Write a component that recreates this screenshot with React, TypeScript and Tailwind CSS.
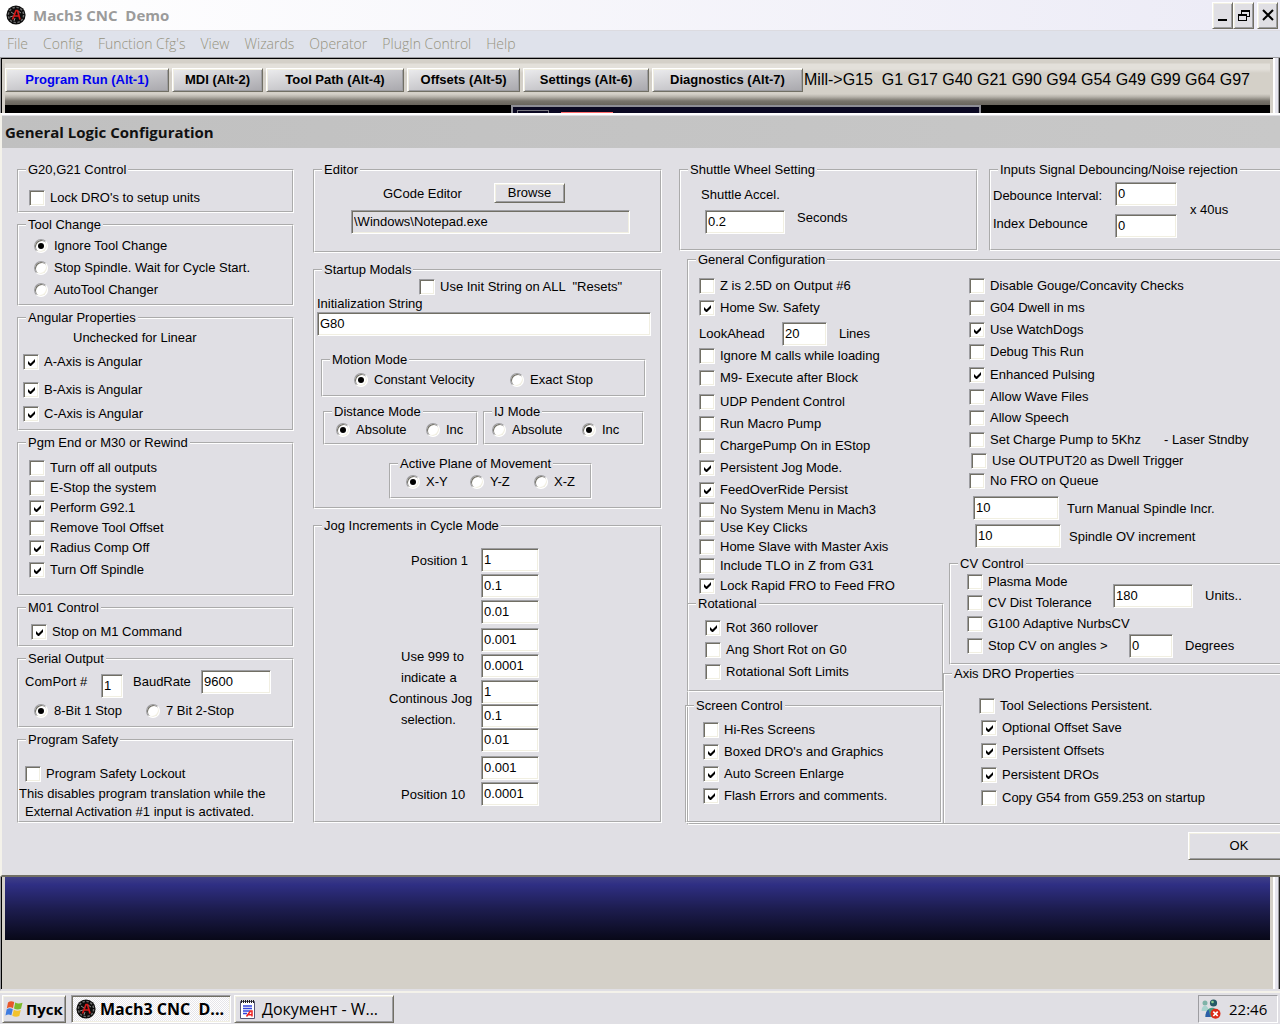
import { useId } from "react";
import type { ReactNode } from "react";
import clsx from "clsx";

const sunken =
  "border border-[#9d9da1] border-b-white border-r-white shadow-[inset_1px_1px_0_#716f64,inset_-1px_-1px_0_#f1efe2]";
const raised =
  "border border-white border-b-[#716f64] border-r-[#716f64] shadow-[inset_1px_1px_0_#f1efe2,inset_-1px_-1px_0_#9d9da1]";

type GroupProps = {
  title: string;
  className?: string;
  children: ReactNode;
};

const Group = ({ title, className, children }: GroupProps) => (
  <fieldset className={clsx("min-w-0 border-2 border-white [border-style:groove]", className)}>
    <legend className="ml-[7px] px-[2px] h-4">{title}</legend>
    {children}
  </fieldset>
);

type ToggleProps = {
  label: string;
  on?: boolean;
  className?: string;
  name?: string;
};

const Check = ({ label, on, className = "h-[22px] pl-2.5" }: ToggleProps) => (
  <label className={clsx("flex items-center gap-[5px] whitespace-pre", className)}>
    <span className="grid place-items-center shrink-0">
      <input
        type="checkbox"
        defaultChecked={on}
        className={clsx("peer col-start-1 row-start-1 appearance-none w-4 h-4 bg-white", sunken)}
      />
      <svg
        viewBox="0 0 7 7"
        className="hidden peer-checked:block col-start-1 row-start-1 w-[7px] h-[7px] pointer-events-none"
      >
        <path d="M0 2v3l2 2h1l4-4V0L2.5 4.5z" />
      </svg>
    </span>
    {label}
  </label>
);

const Radio = ({ label, on, name, className }: ToggleProps) => (
  <label className={clsx("flex items-center gap-[6px] whitespace-pre", className)}>
    <span className="grid place-items-center shrink-0">
      <input
        type="radio"
        name={name}
        defaultChecked={on}
        className={clsx(
          "peer col-start-1 row-start-1 appearance-none w-[14px] h-[14px] rounded-full bg-white",
          sunken
        )}
      />
      <svg
        viewBox="0 0 6 6"
        className="hidden peer-checked:block col-start-1 row-start-1 w-[6px] h-[6px] pointer-events-none"
      >
        <circle cx="3" cy="3" r="3" />
      </svg>
    </span>
    {label}
  </label>
);

type BoxProps = {
  id?: string;
  label?: string;
  value: string;
  readOnly?: boolean;
  className?: string;
};

const Box = ({ id, label, value, readOnly, className }: BoxProps) => (
  <input
    id={id}
    aria-label={label}
    type="text"
    defaultValue={value}
    readOnly={readOnly}
    className={clsx("h-6 shrink-0 pl-[2px] pb-px", !readOnly && "bg-white", sunken, className)}
  />
);

const MachLogo = ({ className }: { className?: string }) => (
  <svg viewBox="0 0 20 20" className={clsx("shrink-0", className)}>
    <circle cx="10" cy="10" r="9.6" fill="#0c0c0c" />
    <circle cx="10" cy="10" r="7.6" fill="none" stroke="#6d6d6d" strokeWidth="1.4" strokeDasharray="2.4 1.6" />
    <path d="M5 7l3 2M4 12l3-1M8 16l1-3M15 8l-3-2" stroke="#8a8a8a" strokeWidth="1" />
    <path d="M6.5 14.5L10 5.5h1.5l2.5 9M8.5 11h4.5" fill="none" stroke="#d61a1a" strokeWidth="1.7" />
  </svg>
);

const TitleBar = () => (
  <header className="flex items-center h-[31px] pl-[6px] pr-[2px] bg-linear-to-r from-white to-[#ecebf6] border-b border-[#dcdbe0]">
    <MachLogo className="w-5 h-5" />
    <h1 className="ml-[7px] font-['Open_Sans'] font-bold text-[15px] text-[#9b9b9b] whitespace-pre">
      Mach3 CNC  Demo
    </h1>
    <div className="ml-auto flex">
      <button aria-label="Minimize" className={clsx("grid place-items-center w-[21px] h-[27px] bg-[#e0dfe4]", raised)}>
        <svg viewBox="0 0 12 14" className="w-3 h-[14px]">
          <path d="M1 11h9v2H1z" />
        </svg>
      </button>
      <button aria-label="Restore" className={clsx("grid place-items-center w-[21px] h-[27px] bg-[#e0dfe4]", raised)}>
        <svg viewBox="0 0 12 14" className="w-3 h-[14px]" fill="none" stroke="#000" shapeRendering="crispEdges">
          <path d="M3.5 6V2.5h8v6H9M3 3.5h9M.5 6.5h8v6h-8zM0 7.5h9" />
        </svg>
      </button>
      <button aria-label="Close" className={clsx("ml-[3px] grid place-items-center w-[21px] h-[27px] bg-[#e0dfe4]", raised)}>
        <svg viewBox="0 0 12 14" className="w-3 h-[14px]" fill="none" stroke="#000" strokeWidth="2">
          <path d="M1 2l10 10M11 2L1 12" />
        </svg>
      </button>
    </div>
  </header>
);

const menus = ["File", "Config", "Function Cfg's", "View", "Wizards", "Operator", "PlugIn Control", "Help"];

const MenuBar = () => (
  <nav className="flex items-center gap-[15px] h-[26px] pl-[7px] bg-[#dfe2eb] font-['Open_Sans'] font-light text-[14px] text-[#96937f]">
    {menus.map((item) => (
      <button key={item}>{item}</button>
    ))}
  </nav>
);

const tabs = [
  { label: "Program Run (Alt-1)", width: "w-[164px]" },
  { label: "MDI (Alt-2)", width: "w-[91px]" },
  { label: "Tool Path (Alt-4)", width: "w-[138px]" },
  { label: "Offsets (Alt-5)", width: "w-[113px]" },
  { label: "Settings (Alt-6)", width: "w-[126px]" },
  { label: "Diagnostics (Alt-7)", width: "w-[151px]" },
];

// window edges on both sides of the Mach3 screen
const ScreenFrame = ({ className, children }: { className?: string; children: ReactNode }) => (
  <div className={clsx("flex bg-[#d4d0c8] border-l border-[#9d9da1]", className)}>
    <div className="w-px bg-black" />
    <div className="flex-1 min-w-0 flex flex-col pl-[3px] pr-[3px]">{children}</div>
    <div className="w-[5px] bg-[#e6e5ee] border-l-2 border-white" />
    <div className="w-[2px] bg-[#222] border-l border-[#9d9da1]" />
  </div>
);

const ScreenTop = () => (
  <ScreenFrame className="border-t border-t-[#9d9da1]">
    <div className="h-px -mx-[3px] bg-black" />
    <div className="flex items-center h-[46px] pb-1 pr-4 bg-[linear-gradient(#d4d0c8_0_4px,#e3e0da_5px_10px,#d4d0c8_14px,#d4d0c8_35px,#b4b0a8_38px,#77736b_42px,#68645c_46px)]">
      <div className="flex gap-[3px]">
        {tabs.map(({ label, width }, index) => (
          <button
            key={label}
            className={clsx(
              "h-6 whitespace-nowrap font-bold bg-linear-to-br from-[#ececee] to-[#a9a8ad]",
              raised,
              width,
              index === 0 && "text-[#0000f0]"
            )}
          >
            {label}
          </button>
        ))}
      </div>
      <output className="ml-px text-[16px] whitespace-pre">
        Mill-&gt;G15  G1 G17 G40 G21 G90 G94 G54 G49 G99 G64 G97
      </output>
    </div>
    <div className="flex h-2 bg-black">
      <div className="flex-[508]" />
      <div className="flex-[467] flex items-end bg-[#0a0822] border-2 border-b-0 border-[#8d8d95]">
        <div className="ml-1 w-8 h-[3px] border border-b-0 border-[#77777f]" />
        <div className="ml-3 w-[52px] h-px bg-[#ff6b6b]" />
      </div>
      <div className="flex-[290]" />
    </div>
  </ScreenFrame>
);

const ScreenBottom = () => (
  <ScreenFrame className="flex-1 border-b-2 border-b-[#e0dfe4]">
    <div className="h-[63px] bg-[linear-gradient(#3f3f86,#2f2f84_12%,#1d1d50_50%,#080818)]" />
  </ScreenFrame>
);

const LeftColumn = () => (
  <div className="w-[277px] shrink-0 flex flex-col gap-1">
    <Group title="G20,G21 Control" className="pt-3 pb-[5px]">
      <Check label="Lock DRO's to setup units" className="h-4 pl-2.5" />
    </Group>
    <Group title="Tool Change" className="pt-[2px] pb-[3px]">
      <Radio name="tool" label="Ignore Tool Change" on className="h-[22px] pl-[15px]" />
      <Radio name="tool" label="Stop Spindle. Wait for Cycle Start." className="h-[22px] pl-[15px]" />
      <Radio name="tool" label="AutoTool Changer" className="h-[22px] pl-[15px]" />
    </Group>
    <Group title="Angular Properties" className="pb-[7px]">
      <p className="h-6 leading-6 pl-[54px]">Unchecked for Linear</p>
      <Check label="A-Axis is Angular" on className="h-6 pl-1" />
      <Check label="B-Axis is Angular" on className="h-8 pl-1" />
      <Check label="C-Axis is Angular" on className="h-4 pl-1" />
    </Group>
    <Group title="Pgm End or M30 or Rewind" className="pt-[7px] pb-3">
      <Check label="Turn off all outputs" className="h-5 pl-2.5" />
      <Check label="E-Stop the system" className="h-5 pl-2.5" />
      <Check label="Perform G92.1" on className="h-5 pl-2.5" />
      <Check label="Remove Tool Offset" className="h-5 pl-2.5" />
      <Check label="Radius Comp Off" on className="h-5 pl-2.5" />
      <Check label="Turn Off Spindle" on className="h-6 pl-2.5" />
    </Group>
    <Group title="M01 Control" className="pt-1 pb-px">
      <Check label="Stop on M1 Command" on className="h-6 pl-3" />
    </Group>
    <Group title="Serial Output" className="pt-[3px] pb-1">
      <div className="flex items-start pl-[6px] h-[30px]">
        <label htmlFor="comport" className="w-[76px] leading-6">ComPort #</label>
        <Box id="comport" value="1" className="mt-1 w-[22px]" />
        <label htmlFor="baud" className="w-[68px] ml-2.5 leading-6">BaudRate</label>
        <Box id="baud" value="9600" className="w-[70px]" />
      </div>
      <div className="flex h-[22px] pl-[15px]">
        <Radio name="bits" label="8-Bit 1 Stop" on className="w-28" />
        <Radio name="bits" label="7 Bit 2-Stop" />
      </div>
    </Group>
    <Group title="Program Safety" className="pt-4">
      <Check label="Program Safety Lockout" className="h-5 pl-[6px]" />
      <p className="mt-px leading-[18px] whitespace-nowrap">
        This disables program translation while the
        <br />
        <span className="pl-[6px]">External Activation #1 input is activated.</span>
      </p>
    </Group>
  </div>
);

const jogValues = [
  { value: "1", height: "h-[26px]" },
  { value: "0.1", height: "h-[26px]" },
  { value: "0.01", height: "h-7" },
  { value: "0.001", height: "h-[26px]" },
  { value: "0.0001", height: "h-[26px]" },
  { value: "1", height: "h-6" },
  { value: "0.1", height: "h-6" },
  { value: "0.01", height: "h-7" },
  { value: "0.001", height: "h-[26px]" },
  { value: "0.0001", height: "h-6" },
];

const MiddleColumn = () => (
  <div className="w-[349px] shrink-0 flex flex-col gap-[9px]">
    <Group title="Editor" className="pt-[5px] pb-[17px]">
      <div className="flex pl-[68px]">
        <label htmlFor="editor" className="w-[111px] leading-[22px]">GCode Editor</label>
        <button type="button" className={clsx("w-[71px] h-5", raised)}>Browse</button>
      </div>
      <Box id="editor" value="\Windows\Notepad.exe" readOnly className="block mt-[5px] ml-9 w-[279px]" />
    </Group>
    <Group title="Startup Modals" className="pb-2">
      <div className="pl-[2px] pr-[9px]">
        <Check label={'Use Init String on ALL  "Resets"'} className="h-[18px] pl-[102px]" />
        <label htmlFor="init" className="block h-4">Initialization String</label>
        <Box id="init" value="G80" className="block w-full" />
        <Group title="Motion Mode" className="mt-4 ml-1 mr-[5px] pb-[3px]">
          <div className="flex h-6 pl-[31px]">
            <Radio name="motion" label="Constant Velocity" on className="w-[156px]" />
            <Radio name="motion" label="Exact Stop" />
          </div>
        </Group>
        <div className="flex gap-[5px] mt-[7px] ml-[6px] mr-[7px]">
          <Group title="Distance Mode" className="w-[155px] pb-[3px]">
            <div className="flex h-5 pl-[11px]">
              <Radio name="distance" label="Absolute" on className="w-[90px]" />
              <Radio name="distance" label="Inc" />
            </div>
          </Group>
          <Group title="IJ Mode" className="flex-1 pb-[3px]">
            <div className="flex h-5 pl-[7px]">
              <Radio name="ij" label="Absolute" className="w-[90px]" />
              <Radio name="ij" label="Inc" on />
            </div>
          </Group>
        </div>
        <Group title="Active Plane of Movement" className="mt-[11px] ml-[72px] w-[203px] pb-[5px]">
          <div className="flex h-5 pl-[15px]">
            <Radio name="plane" label="X-Y" on className="w-16" />
            <Radio name="plane" label="Y-Z" className="w-16" />
            <Radio name="plane" label="X-Z" />
          </div>
        </Group>
      </div>
    </Group>
    <Group title="Jog Increments in Cycle Mode" className="pt-[14px] pb-[15px]">
      <div className="flex">
        <div className="w-[166px] flex flex-col pl-[74px]">
          <span className="pl-[22px] leading-[26px]">Position 1</span>
          <p className="mt-[72px] leading-[21px] whitespace-nowrap">
            <span className="pl-3">Use 999 to</span>
            <br />
            <span className="pl-3">indicate a</span>
            <br />
            Continous Jog
            <br />
            <span className="pl-3">selection.</span>
          </p>
          <span className="mt-auto pl-3 leading-[22px]">Position 10</span>
        </div>
        <div className="flex flex-col">
          {jogValues.map(({ value, height }, index) => (
            <div key={index} className={height}>
              <Box label={`Position ${index + 1}`} value={value} className="block w-[58px]" />
            </div>
          ))}
        </div>
      </div>
    </Group>
  </div>
);

const generalLeft = [
  { label: "Ignore M calls while loading" },
  { label: "M9- Execute after Block" },
  { label: "UDP Pendent Control", className: "h-[22px] pl-2.5 mt-[2px]" },
  { label: "Run Macro Pump" },
  { label: "ChargePump On in EStop" },
  { label: "Persistent Jog Mode.", on: true },
  { label: "FeedOverRide Persist", on: true },
  { label: "No System Menu in Mach3", className: "h-[18px] pl-2.5" },
  { label: "Use Key Clicks", className: "h-[18px] pl-2.5" },
  { label: "Home Slave with Master Axis", className: "h-5 pl-2.5" },
  { label: "Include TLO in Z from G31", className: "h-[18px] pl-2.5" },
  { label: "Lock Rapid FRO to Feed FRO", on: true, className: "h-[21px] pl-2.5" },
];

const SpindleField = ({ label, className }: { label: string; className?: string }) => {
  const id = useId();
  return (
    <div className={clsx("flex h-7", className)}>
      <Box id={id} value="10" className="w-[86px]" />
      <label htmlFor={id} className="ml-2 leading-[26px] whitespace-nowrap">{label}</label>
    </div>
  );
};

const GeneralConfiguration = () => (
  <Group title="General Configuration" className="ml-2 border-r-0">
    <div className="flex">
      <div className="w-[254px] shrink-0 pt-[7px]">
        <Check label="Z is 2.5D on Output #6" />
        <Check label="Home Sw. Safety" on />
        <div className="flex h-[26px] pt-[3px] pl-2.5">
          <label htmlFor="lookahead" className="w-[83px] leading-6">LookAhead</label>
          <Box id="lookahead" value="20" className="w-[45px]" />
          <span className="ml-3 leading-6">Lines</span>
        </div>
        {generalLeft.map((item) => (
          <Check key={item.label} {...item} />
        ))}
        <Group title="Rotational" className="-ml-[2px] -mr-px pt-[5px] pb-[7px]">
          <Check label="Rot 360 rollover" on className="h-[22px] pl-4" />
          <Check label="Ang Short Rot on G0" className="h-[22px] pl-4" />
          <Check label="Rotational Soft Limits" className="h-[22px] pl-4" />
        </Group>
        <Group title="Screen Control" className="-ml-1 mr-px mt-[6px] pt-[5px] pb-[14px]">
          <Check label="Hi-Res Screens" className="h-[22px] pl-4" />
          <Check label="Boxed DRO's and Graphics" on className="h-[22px] pl-4" />
          <Check label="Auto Screen Enlarge" on className="h-[22px] pl-4" />
          <Check label="Flash Errors and comments." on className="h-[22px] pl-4" />
        </Group>
      </div>
      <div className="flex-1 min-w-0 flex flex-col pt-[7px]">
        <div className="pl-4">
          <Check label="Disable Gouge/Concavity Checks" />
          <Check label="G04 Dwell in ms" />
          <Check label="Use WatchDogs" on />
          <Check label="Debug This Run" />
          <Check label="Enhanced Pulsing" on className="h-6 pl-2.5" />
          <Check label="Allow Wave Files" className="h-5 pl-2.5" />
          <Check label="Allow Speech" />
          <div className="flex items-center">
            <Check label="Set Charge Pump to 5Khz" className="h-[22px] pl-2.5 w-[205px]" />
            <span className="whitespace-nowrap">- Laser Stndby</span>
          </div>
          <Check label="Use OUTPUT20 as Dwell Trigger" className="h-5 pl-3" />
          <Check label="No FRO on Queue" className="h-5 pl-2.5" />
          <SpindleField label="Turn Manual Spindle Incr." className="mt-[5px] pl-[14px]" />
          <SpindleField label="Spindle OV increment" className="pl-4" />
        </div>
        <Group title="CV Control" className="mt-1 ml-[6px] border-r-0 pb-[5px]">
          <div className="flex h-[42px]">
            <div className="w-[162px]">
              <Check label="Plasma Mode" className="h-5 pl-4" />
              <Check label="CV Dist Tolerance" className="h-[22px] pl-4" />
            </div>
            <Box label="CV distance tolerance" value="180" className="mt-3 w-20" />
            <span className="ml-3 mt-3 leading-6">Units..</span>
          </div>
          <Check label="G100 Adaptive NurbsCV" className="h-5 pl-4" />
          <div className="flex h-6">
            <Check label="Stop CV on angles >" className="pl-4 w-[178px]" />
            <Box label="CV stop angle" value="0" className="w-11" />
            <span className="ml-3 leading-6">Degrees</span>
          </div>
        </Group>
        <Group title="Axis DRO Properties" className="flex-1 mt-px pt-[13px] border-r-0 border-b-0">
          <Check label="Tool Selections Persistent." className="h-[22px] pl-[34px]" />
          <Check label="Optional Offset Save" on className="h-[22px] pl-9" />
          <Check label="Persistent Offsets" on className="h-6 pl-9" />
          <Check label="Persistent DROs" on className="h-6 pl-9" />
          <Check label="Copy G54 from G59.253 on startup" className="h-[22px] pl-9" />
        </Group>
      </div>
    </div>
  </Group>
);

const RightColumn = () => (
  <div className="flex-1 min-w-0">
    <div className="flex gap-[11px]">
      <Group title="Shuttle Wheel Setting" className="w-[299px] shrink-0 h-[89px] pt-[7px]">
        <label htmlFor="shuttle" className="block pl-5 h-[25px] leading-5">Shuttle Accel.</label>
        <div className="flex pl-6">
          <Box id="shuttle" value="0.2" className="w-20" />
          <span className="ml-3">Seconds</span>
        </div>
      </Group>
      <Group title="Inputs Signal Debouncing/Noise rejection" className="flex-1 whitespace-nowrap border-r-0 pt-1">
        <div className="flex items-center pl-[2px]">
          <div className="flex flex-col gap-1">
            <div className="flex">
              <label htmlFor="debounce" className="w-[122px] leading-7">Debounce Interval:</label>
              <Box id="debounce" value="0" className="w-[62px]" />
            </div>
            <div className="flex">
              <label htmlFor="index-debounce" className="w-[122px] leading-5">Index Debounce</label>
              <Box id="index-debounce" value="0" className="w-[62px]" />
            </div>
          </div>
          <span className="ml-[13px]">x 40us</span>
        </div>
      </Group>
    </div>
    <div className="mt-px">
      <GeneralConfiguration />
    </div>
  </div>
);

const ConfigDialog = () => (
  <section
    role="dialog"
    aria-labelledby="dialog-title"
    className="overflow-hidden bg-[#e0dfe4] border-l-2 border-l-[#f4f2ea] border-t-2 border-t-white border-b-2 border-b-[#716f64]"
  >
    <h2
      id="dialog-title"
      className="h-8 leading-8 mt-px pl-[3px] bg-linear-to-r from-[#c0c0c0] to-[#c8c8c8] font-['Open_Sans'] font-bold text-[15px] text-[#111]"
    >
      General Logic Configuration
    </h2>
    <form className="pt-[14px]">
      <div className="flex items-start pl-[15px]">
        <LeftColumn />
        <div className="w-[19px] shrink-0" />
        <MiddleColumn />
        <div className="w-[17px] shrink-0" />
        <RightColumn />
      </div>
      <div className="flex justify-end mt-[7px] mb-[15px]">
        <button type="button" className={clsx("h-7 w-[102px] -mr-[10px]", raised)}>OK</button>
      </div>
    </form>
  </section>
);

const TaskBar = () => (
  <footer className="flex items-center h-[33px] pl-[2px] pr-[2px] bg-[#e0dfe4] border-t-2 border-[#f4f2ea] font-['Open_Sans'] text-[15px]">
    <button className={clsx("flex items-center w-16 h-7 pl-[2px] gap-px font-bold", raised)}>
      <svg viewBox="0 0 20 20" className="w-5 h-5 shrink-0">
        <path d="M3 3.5c2-1.6 4-1.6 6.2-.4L8 9.2c-2-1.2-4-1.2-6.2.2z" fill="#e8572a" />
        <path d="M10.2 3.6c2.2 1.2 4.4 1.2 7.3.1L16 9.8c-2.5 1-4.5 1-7-.2z" fill="#7cba2c" />
        <path d="M1.6 10.4c2-1.4 4.2-1.3 6.2-.2l-1.4 6.1c-2-1-4-1-5.9.2z" fill="#3f7de0" />
        <path d="M8.8 10.7c2.4 1.2 4.5 1.2 7 .3l-1.5 6c-2.5 1-4.6.8-7-.2z" fill="#f2c22c" />
      </svg>
      Пуск
    </button>
    <button
      className={clsx(
        "flex items-center ml-[5px] w-40 h-7 pl-1 gap-1 whitespace-pre font-bold text-[16px] bg-[repeating-conic-gradient(#fff_0_25%,#e6e5ea_0_50%)] bg-[length:2px_2px]",
        sunken
      )}
    >
      <MachLogo className="w-5 h-5" />
      Mach3 CNC  D...
    </button>
    <button className={clsx("flex items-center ml-[3px] w-40 h-7 pl-1 gap-[6px] whitespace-pre text-[16px]", raised)}>
      <svg viewBox="0 0 17 20" className="w-[17px] h-5 shrink-0">
        <path d="M1.500 2.500h14v17h-14z" fill="#fff" stroke="#555577" />
        <path d="M2 2.500h13" stroke="#222" strokeWidth="3" strokeDasharray="1 1" />
        <path d="M4 7h9M4 9.500h9M4 12h7M4 14.500h4" stroke="#3344dd" strokeWidth="1.3" />
        <path d="M7.500 17.500l4-5.500h1.500v5.500M9 15.800h4" fill="none" stroke="#e22" strokeWidth="1.5" />
      </svg>
      Документ - W...
    </button>
    <div className="ml-auto flex items-center w-20 h-7 pl-[2px] gap-2 border border-[#9d9da1] border-b-white border-r-white">
      <svg viewBox="0 0 20 20" className="w-5 h-5 shrink-0">
        <circle cx="4" cy="4" r="2.5" fill="#7fb3a8" />
        <path d="M.5 12c0-7 7-7 7 0z" fill="#a9d4cf" />
        <circle cx="12.5" cy="4" r="3.6" fill="#245a66" />
        <circle cx="11.5" cy="3" r="1.3" fill="#8fd08f" />
        <path d="M4.500 18c0-12 12-12 13-2l-4 2z" fill="#4a9c84" />
        <path d="M4.500 18c0-4 1-6 3-7.500l2 7.500z" fill="#2c5ea8" />
        <circle cx="14.5" cy="14.8" r="5" fill="#dc2a16" />
        <path d="M12.300 12.600l4.400 4.400M16.700 12.600l-4.400 4.400" stroke="#fff" strokeWidth="1.7" />
      </svg>
      <time>22:46</time>
    </div>
  </footer>
);

export default function App() {
  return (
    <main className="min-h-screen flex flex-col bg-[#e0dfe4] text-black font-['Liberation_Sans',Arial,sans-serif] text-[13px] leading-4">
      <TitleBar />
      <MenuBar />
      <ScreenTop />
      <ConfigDialog />
      <ScreenBottom />
      <TaskBar />
    </main>
  );
}
